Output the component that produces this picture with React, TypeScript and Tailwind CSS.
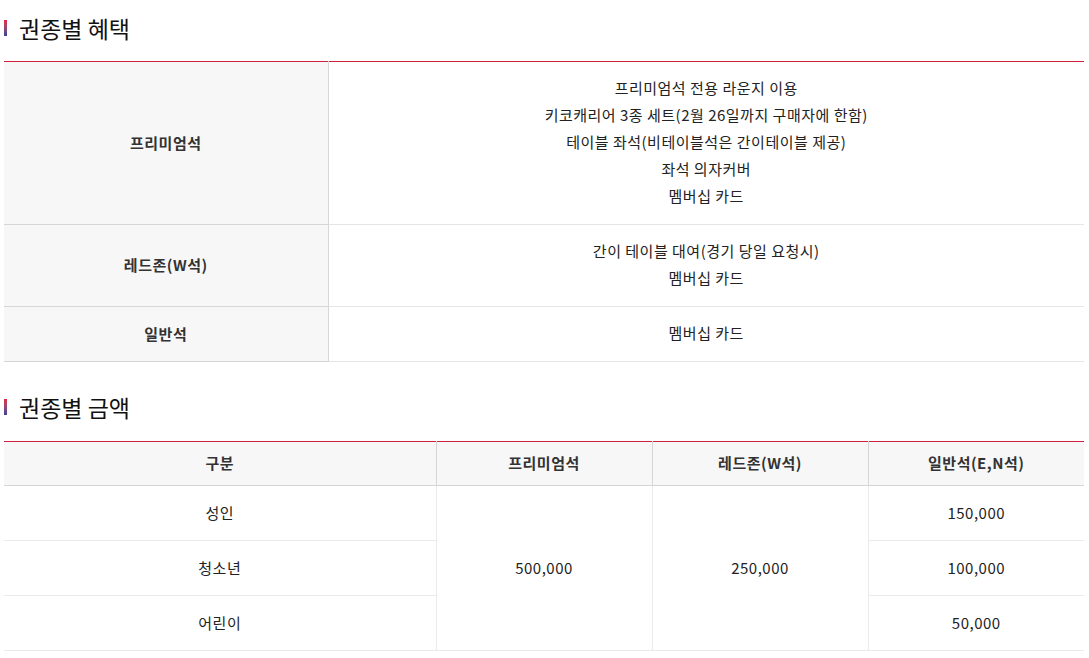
const benefits = [
  {
    label: "프리미엄석",
    items: [
      "프리미엄석 전용 라운지 이용",
      "키코캐리어 3종 세트(2월 26일까지 구매자에 한함)",
      "테이블 좌석(비테이블석은 간이테이블 제공)",
      "좌석 의자커버",
      "멤버십 카드",
    ],
  },
  { label: "레드존(W석)", items: ["간이 테이블 대여(경기 당일 요청시)", "멤버십 카드"] },
  { label: "일반석", items: ["멤버십 카드"] },
];

const general = [
  { label: "성인", price: "150,000" },
  { label: "청소년", price: "100,000" },
  { label: "어린이", price: "50,000" },
];

function Title({ children }: { children: string }) {
  return (
    <h2 className="flex items-center gap-[12px] text-[23px] leading-[24px] tracking-normal text-[#111]">
      <span className="h-[16px] w-[3px] bg-gradient-to-b from-[#e8203a] to-[#3a3f9c]" />
      {children}
    </h2>
  );
}

export default function App() {
  return (
    <div
      className="ml-[4px] w-[1080px] bg-white pt-[16px] text-[15px] tracking-[0.5px] text-[#222]"
      style={{ fontFamily: '"Noto Sans CJK KR", "Liberation Sans", sans-serif' }}
    >
      <Title>권종별 혜택</Title>

      <table className="mt-[21px] w-full table-fixed border-collapse border-t border-t-[#d2213c]">
        <colgroup>
          <col className="w-[324px]" />
          <col />
        </colgroup>
        <tbody>
          {benefits.map((row) => (
            <tr key={row.label} className="border-b border-[#e6e6e6]">
              <th className="border-r border-b border-[#d6d6d6] bg-[#f7f7f7] font-bold text-[#333]">
                {row.label}
              </th>
              <td className="pt-[12px] pb-[15px] text-center leading-[27px]">
                {row.items.map((item) => (
                  <div key={item}>{item}</div>
                ))}
              </td>
            </tr>
          ))}
        </tbody>
      </table>

      <div className="mt-[33px]">
        <Title>권종별 금액</Title>
      </div>

      <table className="mt-[22px] w-full table-fixed border-collapse border-t border-t-[#d2213c]">
        <colgroup>
          <col className="w-[432px]" />
          <col className="w-[216px]" />
          <col className="w-[216px]" />
          <col className="w-[216px]" />
        </colgroup>
        <thead>
          <tr className="h-[44px] border-b border-[#d6d6d6] bg-[#f7f7f7] font-bold text-[#333]">
            <th>구분</th>
            <th className="border-l border-[#d6d6d6]">프리미엄석</th>
            <th className="border-l border-[#d6d6d6]">레드존(W석)</th>
            <th className="border-l border-[#d6d6d6]">일반석(E,N석)</th>
          </tr>
        </thead>
        <tbody>
          {general.map((row, i) => (
            <tr key={row.label} className="h-[55px] border-b border-[#eaeaea] text-center">
              <td>{row.label}</td>
              {i === 0 && (
                <>
                  <td rowSpan={3} className="border-l border-[#eaeaea]">
                    500,000
                  </td>
                  <td rowSpan={3} className="border-l border-[#eaeaea]">
                    250,000
                  </td>
                </>
              )}
              <td className="border-l border-[#eaeaea]">{row.price}</td>
            </tr>
          ))}
        </tbody>
      </table>
    </div>
  );
}
